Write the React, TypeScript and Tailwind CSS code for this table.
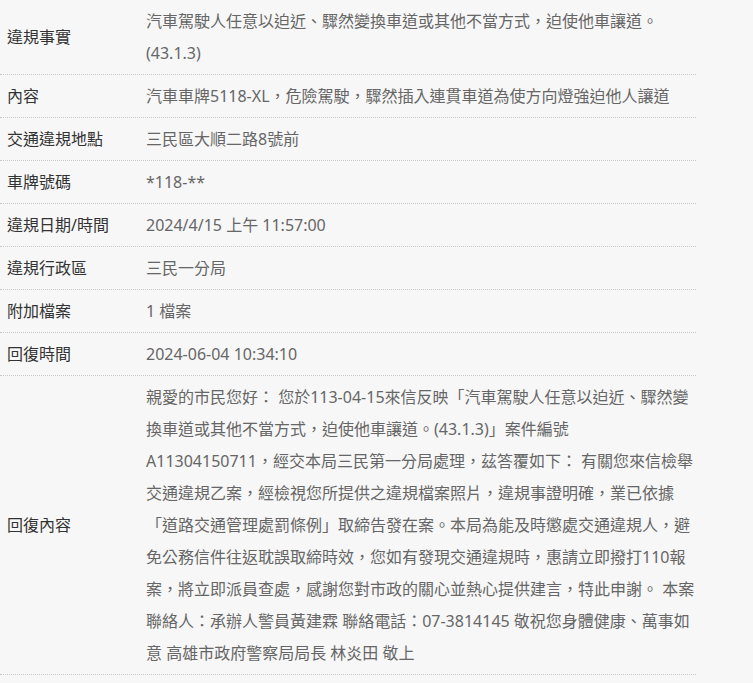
import React from "react";

const rows: { label: string; lines: string[] }[] = [
  {
    label: "違規事實",
    lines: ["汽車駕駛人任意以迫近、驟然變換車道或其他不當方式，迫使他車讓道。", "(43.1.3)"],
  },
  { label: "內容", lines: ["汽車車牌5118-XL，危險駕駛，驟然插入連貫車道為使方向燈強迫他人讓道"] },
  { label: "交通違規地點", lines: ["三民區大順二路8號前"] },
  { label: "車牌號碼", lines: ["*118-**"] },
  { label: "違規日期/時間", lines: ["2024/4/15 上午 11:57:00"] },
  { label: "違規行政區", lines: ["三民一分局"] },
  { label: "附加檔案", lines: ["1 檔案"] },
  { label: "回復時間", lines: ["2024-06-04 10:34:10"] },
  {
    label: "回復內容",
    lines: [
      "親愛的市民您好： 您於113-04-15來信反映「汽車駕駛人任意以迫近、驟然變",
      "換車道或其他不當方式，迫使他車讓道。(43.1.3)」案件編號",
      "A11304150711，經交本局三民第一分局處理，茲答覆如下： 有關您來信檢舉",
      "交通違規乙案，經檢視您所提供之違規檔案照片，違規事證明確，業已依據",
      "「道路交通管理處罰條例」取締告發在案。本局為能及時懲處交通違規人，避",
      "免公務信件往返耽誤取締時效，您如有發現交通違規時，惠請立即撥打110報",
      "案，將立即派員查處，感謝您對市政的關心並熱心提供建言，特此申謝。 本案",
      "聯絡人：承辦人警員黃建霖 聯絡電話：07-3814145 敬祝您身體健康、萬事如",
      "意 高雄市政府警察局局長 林炎田 敬上",
    ],
  },
];

export default function App() {
  return (
    <div
      className="min-h-screen bg-[#f7f7f7] text-[16px] leading-[32px]"
      style={{ fontFamily: '"Noto Sans", "Noto Sans CJK TC", sans-serif' }}
    >
      <div className="w-[696px]">
        {rows.map((row) => (
          <div
            key={row.label}
            className="grid grid-cols-[146px_1fr] border-b border-dotted border-[#c8c8c8]"
          >
            <div className="flex items-center py-[5px] pl-[7px] text-[#333]">
              {row.label}
            </div>
            <div className="py-[5px] text-[#666] whitespace-nowrap">
              {row.lines.map((line, i) => (
                <div key={i}>{line}</div>
              ))}
            </div>
          </div>
        ))}
      </div>
    </div>
  );
}
